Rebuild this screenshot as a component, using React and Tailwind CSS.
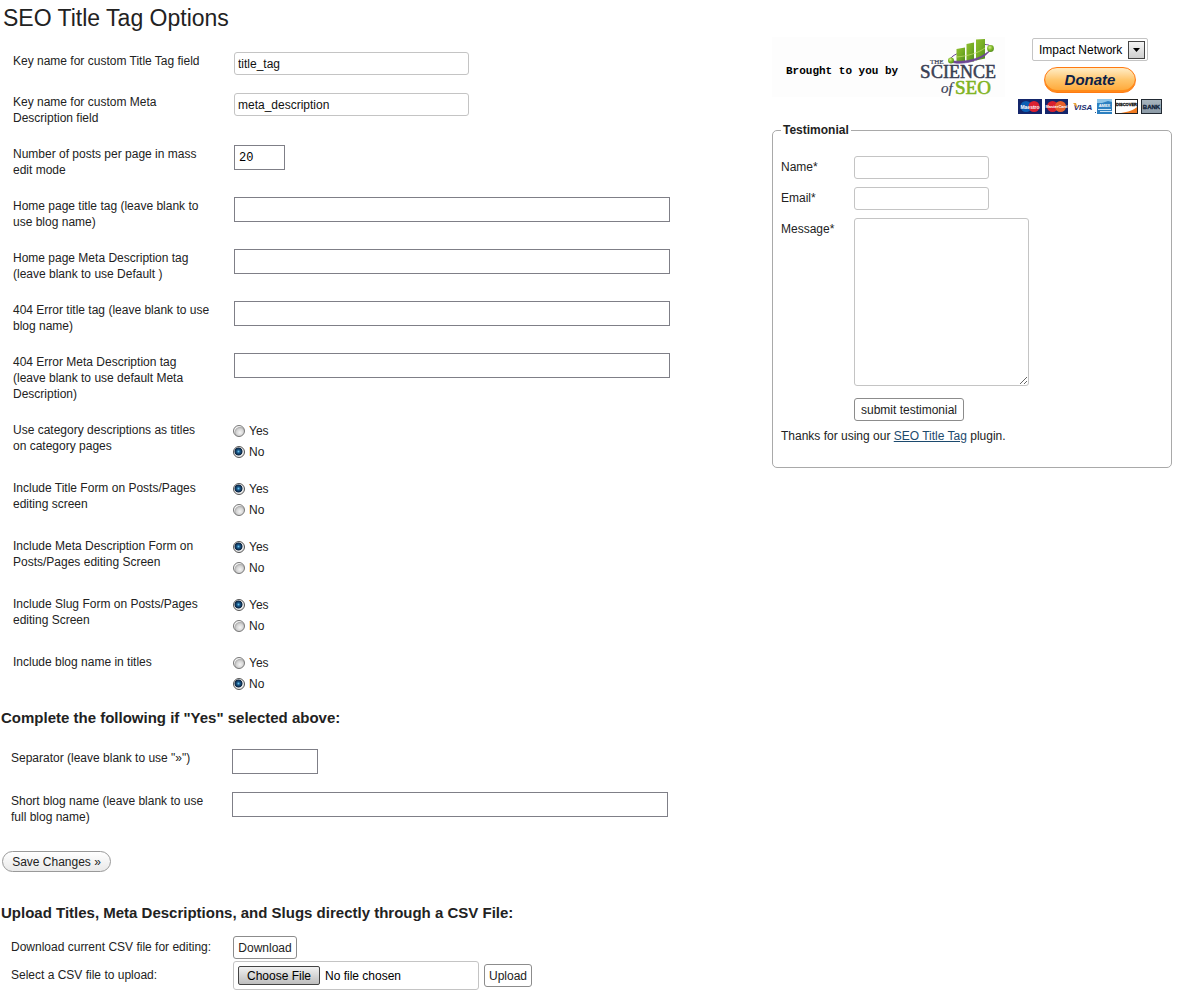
import React from "react";

const roundedInput =
  "block h-[23px] rounded-[3px] border border-[#c4c4c4] bg-white px-[3px] text-xs text-[#111] outline-none";
const squareInput =
  "block h-[25px] max-w-full border border-[#7f7f87] bg-white px-1 text-xs text-black outline-none";
const plainButton =
  "h-[23px] rounded-[3px] border border-[#8c8c8c] bg-white px-[3px] text-xs leading-4 text-[#222]";

function TextRow({ id, label, value, className }) {
  return (
    <div className="grid grid-cols-[220px_minmax(0,1fr)]">
      <label htmlFor={id} className="py-[10px] pr-3 pl-[10px] leading-4">
        {label}
      </label>
      <div className="px-[11px] py-[9px]">
        <input id={id} type="text" defaultValue={value} className={className} />
      </div>
    </div>
  );
}

function Radio({ name, value, checked }) {
  return (
    <label className="flex h-[21px] items-center gap-1">
      <input
        type="radio"
        name={name}
        value={value}
        defaultChecked={checked}
        className="size-3 appearance-none rounded-full border border-[#777] bg-[radial-gradient(circle_at_60%_65%,#f4f4f4_0%,#d4d4d4_40%,#b0b0b0_58%,#f4f4f4_66%)] checked:border-[#555] checked:bg-[radial-gradient(circle_at_45%_45%,#6cc4ee_0%,#1b5a8c_20%,#0a2340_46%,#e8e8e8_56%)]"
      />
      <span>{value}</span>
    </label>
  );
}

function RadioRow({ name, label, value }) {
  return (
    <div role="radiogroup" aria-labelledby={name} className="grid grid-cols-[220px_minmax(0,1fr)]">
      <span id={name} className="py-[10px] pr-3 pl-[10px] leading-4">{label}</span>
      <div className="px-[10px] py-2">
        <Radio name={name} value="Yes" checked={value === "Yes"} />
        <Radio name={name} value="No" checked={value === "No"} />
      </div>
    </div>
  );
}

function Logo() {
  return (
    <svg width="80" height="60" viewBox="0 0 80 60" role="img" aria-label="The Science of SEO">
      <defs>
        <linearGradient id="bar" x1="0" y1="0" x2="1" y2="1">
          <stop offset="0" stopColor="#8fbe2e" />
          <stop offset="0.5" stopColor="#76ad25" />
          <stop offset="1" stopColor="#4c8a1c" />
        </linearGradient>
        <radialGradient id="ball" cx="0.4" cy="0.35" r="0.7">
          <stop offset="0" stopColor="#d5ee88" />
          <stop offset="0.5" stopColor="#80b82a" />
          <stop offset="1" stopColor="#4f8a1b" />
        </radialGradient>
      </defs>
      <path d="M32 22C34 19 38 17 41 16M67 7.500C71 7.500 73 9 73 11" fill="none" stroke="#6c4596" strokeWidth="1" />
      <path d="M38.500 12L47 10.500V25.500H38.500Z" fill="url(#bar)" />
      <path d="M48.500 7L56 5.500V24.500H48.500Z" fill="url(#bar)" />
      <path d="M58 2.500L67 2V21.500L58 23.500Z" fill="url(#bar)" />
      <path d="M38.500 20C50 19 60 16 67 11" fill="none" stroke="#c5e072" strokeWidth="0.7" />
      <path d="M32 24C38 29.500 66 25 73 12C64 22 46 26 32 23.500Z" fill="#6c4596" stroke="#6c4596" strokeWidth="0.6" />
      <circle cx="33" cy="23.500" r="3" fill="url(#ball)" />
      <circle cx="72.500" cy="11.500" r="3.400" fill="url(#ball)" />
      <g fontFamily="'Liberation Serif', serif" fill="#3a4054" stroke="#3a4054" strokeWidth="0.5">
        <text x="12" y="27" fontSize="7" strokeWidth="0.2">THE</text>
        <text x="2" y="41" fontSize="19">S</text>
        <text x="13" y="41" fontSize="18">CIENCE</text>
        <text x="23" y="56" fontSize="15" fontStyle="italic" strokeWidth="0.2">of</text>
        <text x="37" y="57" fontSize="19" fill="#7fb321" stroke="#7fb321" strokeWidth="0.6">SEO</text>
      </g>
    </svg>
  );
}

function Cards() {
  return (
    <svg width="144" height="15" viewBox="0 0 144 15" role="img" aria-label="Accepted payment cards">
      <defs>
        <linearGradient id="bank" x1="0" y1="0" x2="0" y2="1">
          <stop offset="0" stopColor="#a9b5be" />
          <stop offset="1" stopColor="#8b9aa6" />
        </linearGradient>
      </defs>
      <g fontFamily="'Liberation Sans', sans-serif" fontWeight="bold" textAnchor="middle">
        <rect width="24" height="15" fill="#14266b" />
        <circle cx="8" cy="7.5" r="5.5" fill="#0a5fb5" />
        <circle cx="16" cy="7.5" r="5.5" fill="#dc2030" />
        <text x="12" y="9.5" fontSize="5" fill="#fff">Maestro</text>
        <rect x="27" width="23" height="15" fill="#14266b" />
        <circle cx="34.5" cy="7.5" r="5.5" fill="#d81f2e" />
        <circle cx="42.5" cy="7.5" r="5.5" fill="#e8602a" />
        <text x="38.5" y="9" fontSize="4" fill="#fff">MasterCard</text>
        <text x="65" y="11" fontSize="8" fontStyle="italic" fill="#172c72">VISA</text>
        <path d="M55 4H58L60 10Z" fill="#e8a33a" />
        <path d="M77 13H78V14H77Z" fill="#2c5a90" />
        <rect x="79" width="15" height="15" fill="#2c7fc0" />
        <path d="M79 0H94V3L90 2L84 4H79Z" fill="#8cc4e8" />
        <text x="86.5" y="8" fontSize="4" fill="#fff">AMEX</text>
        <path d="M80 10.5H93M82 12.5H94" stroke="#cfe6f6" strokeWidth="1" />
        <rect x="97.5" y="0.5" width="22" height="14" fill="#fff" stroke="#222" />
        <path d="M119 8V14H103C110 13 116 11 119 8Z" fill="#f07a20" />
        <text x="108.5" y="7" fontSize="4" fill="#111" stroke="#111" strokeWidth="0.3">DISCOVER</text>
        <rect x="123.5" y="0.5" width="20" height="14" fill="url(#bank)" stroke="#222a33" />
        <text x="133.5" y="10" fontSize="6" fill="#0f2038" stroke="#0f2038" strokeWidth="0.3">BANK</text>
      </g>
    </svg>
  );
}

function Sidebar() {
  return (
    <aside className="w-[400px] shrink-0 pt-[37px]">
      <div className="flex h-[85px] items-start">
        <div className="flex h-[60px] w-[233px] items-center justify-between bg-[#fdfdfd] pl-[14px] pr-[7px]">
          <span className="whitespace-nowrap pt-2 font-['Liberation_Mono',monospace] text-[11px] font-bold text-black">
            Brought to you by
          </span>
          <Logo />
        </div>
        <div className="ml-[13px] flex w-36 flex-col items-center gap-[6px] pt-px">
          <div className="relative">
            <select
              aria-label="Donation recipient"
              className="block h-[23px] w-[116px] appearance-none rounded-[2px] border border-[#c4c4c4] bg-white pl-[6px] text-xs text-black"
            >
              <option>Impact Network</option>
            </select>
            <span className="pointer-events-none absolute top-[3px] right-[3px] flex h-[18px] w-[17px] items-center justify-center border border-[#444] bg-linear-to-b from-[#f4f4f4] to-[#cfcfcf]">
              <svg width="7" height="4" viewBox="0 0 7 4" aria-hidden="true">
                <path d="M0 0H7L3.5 4Z" fill="#000" />
              </svg>
            </span>
          </div>
          <button
            type="button"
            className="h-[26px] w-[92px] rounded-full border border-[#ff7a12] bg-linear-to-b from-[#ffe9bd] from-5% via-[#ffc56a] via-50% to-[#ffa52e] text-[15px] leading-5 font-bold text-[#0c2148] italic shadow-[inset_0_-2px_0_#ff8a1a]"
          >
            Donate
          </button>
          <Cards />
        </div>
      </div>
      <fieldset className="rounded-[5px] border border-[#a9a9a9] px-2 pb-[23px]">
        <legend className="px-[2px] leading-4 font-bold text-[#222]">Testimonial</legend>
        <form className="pt-[18px]" onSubmit={(e) => e.preventDefault()}>
          <div className="grid grid-cols-[73px_minmax(0,1fr)] gap-y-2">
            <label htmlFor="t-name" className="pt-[3px] leading-4">Name*</label>
            <input id="t-name" type="text" className={`${roundedInput} w-[135px]`} />
            <label htmlFor="t-email" className="pt-[3px] leading-4">Email*</label>
            <input id="t-email" type="text" className={`${roundedInput} w-[135px]`} />
            <label htmlFor="t-message" className="pt-[3px] leading-4">Message*</label>
            <textarea
              id="t-message"
              className="block h-[168px] w-[175px] rounded-[3px] border border-[#c4c4c4] bg-white p-1 text-xs outline-none"
            />
            <button type="submit" className={`${plainButton} col-start-2 mt-1 w-[110px]`}>
              submit testimonial
            </button>
          </div>
          <p className="mt-[7px] leading-4">
            Thanks for using our <a href="#plugin" className="text-[#1c4a6e] underline">SEO Title Tag</a> plugin.
          </p>
        </form>
      </fieldset>
    </aside>
  );
}

export default function App() {
  return (
    <div className="flex min-h-screen items-start justify-between bg-white pr-4 font-['Liberation_Sans',Arial,sans-serif] text-xs text-[#222]">
      <main className="min-w-0 flex-1 pb-4">
        <h1 className="h-[43px] pl-[3px] text-[23px] leading-9">SEO Title Tag Options</h1>
        <form className="pl-[3px]" onSubmit={(e) => e.preventDefault()}>
          <TextRow id="key-title" label="Key name for custom Title Tag field" value="title_tag" className={`${roundedInput} w-[235px]`} />
          <TextRow id="key-meta" label="Key name for custom Meta Description field" value="meta_description" className={`${roundedInput} w-[235px]`} />
          <TextRow id="per-page" label="Number of posts per page in mass edit mode" value="20" className={`${squareInput} w-[51px] font-['Liberation_Mono',monospace]`} />
          <TextRow id="home-title" label="Home page title tag (leave blank to use blog name)" className={`${squareInput} w-[436px]`} />
          <TextRow id="home-meta" label="Home page Meta Description tag (leave blank to use Default )" className={`${squareInput} w-[436px]`} />
          <TextRow id="error-title" label="404 Error title tag (leave blank to use blog name)" className={`${squareInput} w-[436px]`} />
          <TextRow id="error-meta" label="404 Error Meta Description tag (leave blank to use default Meta Description)" className={`${squareInput} w-[436px]`} />
          <RadioRow name="category" label="Use category descriptions as titles on category pages" value="No" />
          <RadioRow name="title-form" label="Include Title Form on Posts/Pages editing screen" value="Yes" />
          <RadioRow name="meta-form" label="Include Meta Description Form on Posts/Pages editing Screen" value="Yes" />
          <RadioRow name="slug-form" label="Include Slug Form on Posts/Pages editing Screen" value="Yes" />
          <RadioRow name="blog-name" label="Include blog name in titles" value="No" />
        </form>
        <form className="pl-px" onSubmit={(e) => e.preventDefault()}>
          <h2 className="pt-[6px] pb-3 text-[15px] leading-5 font-bold">Complete the following if "Yes" selected above:</h2>
          <TextRow id="separator" label={'Separator (leave blank to use "»")'} className={`${squareInput} w-[86px]`} />
          <TextRow id="short-name" label="Short blog name (leave blank to use full blog name)" className={`${squareInput} w-[436px]`} />
          <button
            type="submit"
            className="mt-4 ml-px block h-[21px] w-[109px] rounded-full border border-[#999] bg-linear-to-b from-white to-[#e9e9e9] text-xs leading-4 text-[#222]"
          >
            Save Changes »
          </button>
        </form>
        <form className="pl-px" onSubmit={(e) => e.preventDefault()}>
          <h2 className="pt-[31px] pb-[13px] text-[15px] leading-5 font-bold">
            Upload Titles, Meta Descriptions, and Slugs directly through a CSV File:
          </h2>
          <div className="grid grid-cols-[232px_minmax(0,1fr)] gap-y-[2px]">
            <span className="pt-[3px] pl-[10px] leading-4">Download current CSV file for editing:</span>
            <div>
              <button type="button" className={`${plainButton} block w-16`}>Download</button>
            </div>
            <label htmlFor="csv" className="pt-[6px] pl-[10px] leading-4">Select a CSV file to upload:</label>
            <div className="flex items-center gap-[5px]">
              <input
                id="csv"
                type="file"
                className="h-[29px] w-[246px] rounded-[3px] border border-[#c4c4c4] bg-white px-1 py-[4px] text-xs text-black file:mr-[5px] file:h-[19px] file:w-[82px] file:rounded-[2px] file:border file:border-solid file:border-[#444] file:bg-linear-to-b file:from-[#f2f2f2] file:to-[#bdbdbd] file:p-0 file:text-xs file:leading-4 file:text-black"
              />
              <button type="submit" className={`${plainButton} w-12`}>Upload</button>
            </div>
          </div>
        </form>
      </main>
      <Sidebar />
    </div>
  );
}
